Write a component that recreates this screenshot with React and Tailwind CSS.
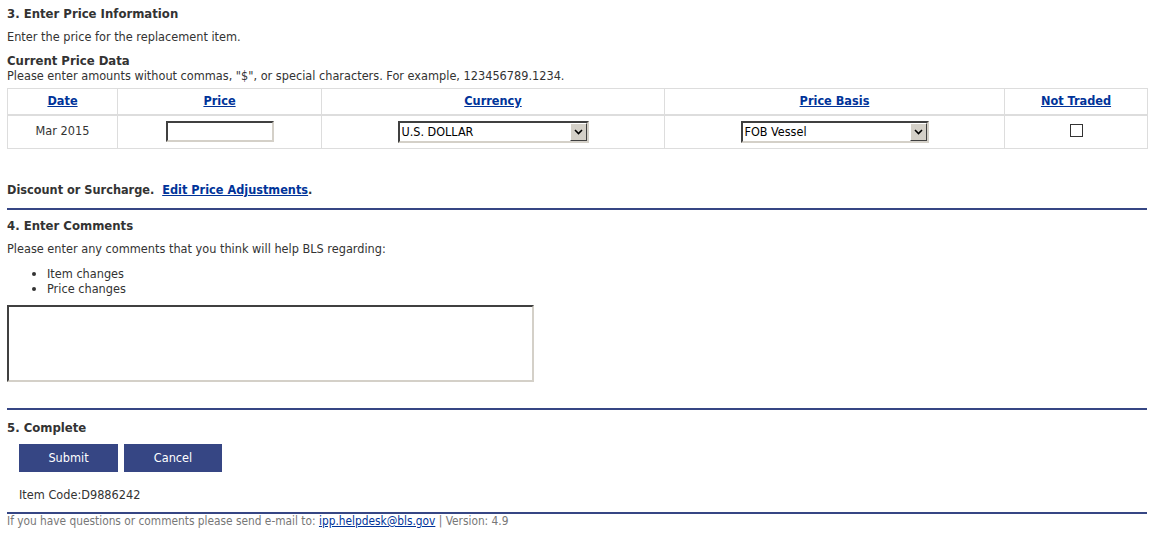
import React from "react";

function Select({ value, width }) {
  return (
    <div
      className="relative inline-block h-[22px] bg-white border-2 border-t-[#404040] border-l-[#404040] border-b-[#d4d0c8] border-r-[#d4d0c8] align-middle"
      style={{ width }}
    >
      <div className="pl-[2px] leading-[18px] text-[12.5px] text-[#000] text-left">{value}</div>
      <div className="absolute right-0 top-0 h-[18px] w-[17px] bg-[#d4d0c8] border border-t-white border-l-white border-b-[#404040] border-r-[#404040] flex items-center justify-center">
        <svg width="9" height="6" viewBox="0 0 9 6">
          <path d="M1 1 L4.5 4.5 L8 1" stroke="#000" strokeWidth="1.6" fill="none" />
        </svg>
      </div>
    </div>
  );
}

function Rule({ className = "" }) {
  return <div className={"h-[2px] bg-[#364684] w-full " + className} />;
}

export default function App() {
  const link = "text-[#003399] underline font-bold";
  return (
    <div className="bg-white min-h-[534px]">
      <div
        className="ml-[7px] w-[1140px] text-[12.6px] text-[#333]"
        style={{ fontFamily: "Tahoma, 'DejaVu Sans Condensed', 'DejaVu Sans', sans-serif" }}
      >
        <div className="pt-[6px] font-bold text-[13px] leading-[16px]">3. Enter Price Information</div>
        <div className="mt-[7px] leading-[16px]">Enter the price for the replacement item.</div>
        <div className="mt-[8px] font-bold text-[13px] leading-[15px]">Current Price Data</div>
        <div className="leading-[15px]">
          Please enter amounts without commas, "$", or special characters. For example, 123456789.1234.
        </div>

        <table className="mt-[5px] w-[1140px] border-collapse border border-[#ddd] table-fixed">
          <colgroup>
            <col style={{ width: 110 }} />
            <col style={{ width: 204 }} />
            <col style={{ width: 343 }} />
            <col style={{ width: 340 }} />
            <col style={{ width: 143 }} />
          </colgroup>
          <thead>
            <tr className="h-[26px] border-b-2 border-[#ddd]">
              {["Date", "Price", "Currency", "Price Basis", "Not Traded"].map((h) => (
                <th key={h} className="border-x border-[#ddd] text-center font-bold p-0">
                  <span className={link}>{h}</span>
                </th>
              ))}
            </tr>
          </thead>
          <tbody>
            <tr className="h-[34px]">
              <td className="border border-[#ddd] text-center p-0">Mar 2015</td>
              <td className="border border-[#ddd] text-center p-0">
                <div className="inline-block w-[108px] h-[21px] bg-white border-2 border-t-[#404040] border-l-[#404040] border-b-[#d4d0c8] border-r-[#d4d0c8] align-middle" />
              </td>
              <td className="border border-[#ddd] text-center p-0">
                <Select value="U.S. DOLLAR" width={191} />
              </td>
              <td className="border border-[#ddd] text-center p-0">
                <Select value="FOB Vessel" width={188} />
              </td>
              <td className="border border-[#ddd] text-center p-0">
                <div className="inline-block w-[13px] h-[13px] border border-[#333] bg-white align-middle -mt-[3px]" />
              </td>
            </tr>
          </tbody>
        </table>

        <div className="mt-[33px] leading-[16px] font-bold">
          Discount or Surcharge.&nbsp;&nbsp;<span className={link}>Edit Price Adjustments</span>.
        </div>
        <Rule className="mt-[10px]" />

        <div className="mt-[8px] font-bold text-[13px] leading-[16px]">4. Enter Comments</div>
        <div className="mt-[7px] leading-[16px]">Please enter any comments that you think will help BLS regarding:</div>
        <ul className="mt-[9px] pl-[40px] list-disc leading-[15px]">
          <li>Item changes</li>
          <li>Price changes</li>
        </ul>
        <div className="mt-[9px] w-[527px] h-[77px] bg-white border-2 border-t-[#404040] border-l-[#404040] border-b-[#d4d0c8] border-r-[#d4d0c8]" />

        <Rule className="mt-[26px]" />
        <div className="mt-[10px] font-bold text-[13px] leading-[16px]">5. Complete</div>
        <div className="mt-[8px] ml-[12px] flex gap-[6px]">
          <button className="w-[99px] h-[28px] bg-[#364684] text-white text-[12.6px]">Submit</button>
          <button className="w-[98px] h-[28px] bg-[#364684] text-white text-[12.6px]">Cancel</button>
        </div>
        <div className="mt-[15px] ml-[12px] leading-[16px]">Item Code:D9886242</div>
        <Rule className="mt-[9px]" />
        <div className="text-[11.8px] leading-[14px] text-[#777]">
          If you have questions or comments please send e-mail to:{" "}
          <span className="text-[#003399] underline">ipp.helpdesk@bls.gov</span> | Version: 4.9
        </div>
      </div>
    </div>
  );
}
